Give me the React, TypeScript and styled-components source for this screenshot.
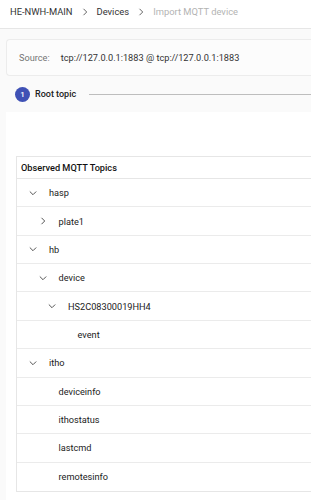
import React from "react";
import styled, { createGlobalStyle } from "styled-components";

interface TopicNode {
  name: string;
  level: number;
  expandable?: boolean;
  open?: boolean;
}

const topics: TopicNode[] = [
  { name: "hasp", level: 0, expandable: true, open: true },
  { name: "plate1", level: 1, expandable: true },
  { name: "hb", level: 0, expandable: true, open: true },
  { name: "device", level: 1, expandable: true, open: true },
  { name: "HS2C08300019HH4", level: 2, expandable: true, open: true },
  { name: "event", level: 3 },
  { name: "itho", level: 0, expandable: true, open: true },
  { name: "deviceinfo", level: 1 },
  { name: "ithostatus", level: 1 },
  { name: "lastcmd", level: 1 },
  { name: "remotesinfo", level: 1 },
];

export default function App() {
  return (
    <>
      <GlobalStyle />
      <Page>
        <Header>
          <Crumb>HE-NWH-MAIN</Crumb>
          <CrumbSep>
            <Chevron open={false} />
          </CrumbSep>
          <Crumb>Devices</Crumb>
          <CrumbSep>
            <Chevron open={false} />
          </CrumbSep>
          <Crumb muted>Import MQTT device</Crumb>
        </Header>
        <Body>
          <SourceCard>
            <SourceLabel>Source:</SourceLabel>
            <SourceValue>tcp://127.0.0.1:1883 @ tcp://127.0.0.1:1883</SourceValue>
          </SourceCard>
          <Stepper>
            <StepDot>1</StepDot>
            <StepLabel>Root topic</StepLabel>
            <StepLine />
          </Stepper>
          <Panel>
            <Table>
              <HeadRow>Observed MQTT Topics</HeadRow>
              {topics.map((t) => (
                <Row key={t.name} level={t.level}>
                  <Toggle>{t.expandable && <Chevron open={!!t.open} />}</Toggle>
                  <TopicName>{t.name}</TopicName>
                </Row>
              ))}
            </Table>
          </Panel>
        </Body>
      </Page>
    </>
  );
}

function Chevron({ open }: { open: boolean }) {
  return (
    <ChevronSvg viewBox="0 0 8 8" open={open}>
      <path d="M2.5 0.8 L5.7 4 L2.5 7.2" fill="none" stroke="currentColor" strokeWidth="1" />
    </ChevronSvg>
  );
}

// styled component
const GlobalStyle = createGlobalStyle`
  html, body {
    margin: 0;
    padding: 0;
    background: #ffffff;
  }
  body {
    font-family: Roboto, "Liberation Sans", sans-serif;
    color: #212121;
    -webkit-font-smoothing: antialiased;
  }
`;

const Page = styled.div`
  width: 311px;
  height: 500px;
  overflow: hidden;
  background: #fafafa;
  display: flex;
  flex-direction: column;
`;

const Header = styled.div`
  height: 29px;
  flex-shrink: 0;
  background: #ffffff;
  border-bottom: 1px solid #e6e6e6;
  box-sizing: border-box;
  display: flex;
  align-items: center;
  padding: 0 0 5px 10px;
  color: #666666;
`;

const Crumb = styled.span<{ muted?: boolean }>`
  font-size: 9.4px;
  color: ${(p) => (p.muted ? "#b3b3b3" : "#333333")};
  white-space: nowrap;
`;

const CrumbSep = styled.span`
  display: flex;
  align-items: center;
  margin: 0 8px 0 8px;
`;

const ChevronSvg = styled.svg<{ open: boolean }>`
  width: 8px;
  height: 8px;
  flex-shrink: 0;
  transform: rotate(${(p) => (p.open ? "90deg" : "0deg")});
`;

const Body = styled.div`
  flex: 1;
  padding: 10px 0 0 6px;
  display: flex;
  flex-direction: column;
`;

const SourceCard = styled.div`
  height: 37px;
  box-sizing: border-box;
  background: #fcfcfc;
  border: 1px solid #ececec;
  border-right: none;
  border-radius: 4px 0 0 4px;
  display: flex;
  align-items: center;
  padding-left: 12px;
  gap: 11px;
  font-size: 9.2px;
  white-space: nowrap;
`;

const SourceLabel = styled.span`
  color: #757575;
`;

const SourceValue = styled.span`
  color: #333333;
`;

const Stepper = styled.div`
  height: 36px;
  display: flex;
  align-items: center;
  padding-left: 9px;
`;

const StepDot = styled.div`
  width: 15px;
  height: 15px;
  border-radius: 50%;
  background: #3f51b5;
  color: #ffffff;
  font-size: 8px;
  font-weight: 500;
  display: flex;
  align-items: center;
  justify-content: center;
  flex-shrink: 0;
`;

const StepLabel = styled.span`
  font-size: 9px;
  font-weight: 500;
  color: #212121;
  margin-left: 5px;
  white-space: nowrap;
`;

const StepLine = styled.div`
  flex: 1;
  height: 1px;
  background: #bdbdbd;
  margin-left: 13px;
`;

const Panel = styled.div`
  flex: 1;
  background: #ffffff;
  padding: 44px 0 0 10px;
`;

const Table = styled.div`
  border: 1px solid #e6e6e6;
  border-right: none;
  display: flex;
  flex-direction: column;
`;

const HeadRow = styled.div`
  height: 22px;
  box-sizing: border-box;
  display: flex;
  align-items: center;
  padding-left: 4px;
  font-size: 9.2px;
  font-weight: 500;
  color: #111111;
  border-bottom: 1px solid #e6e6e6;
`;

const Row = styled.div<{ level: number }>`
  height: 28.36px;
  box-sizing: border-box;
  display: flex;
  align-items: center;
  padding-left: ${(p) => 12 + p.level * 9.5}px;
  border-bottom: 1px solid #ebebeb;
  font-size: 9.2px;
  color: #222222;
  &:last-child {
    border-bottom: none;
  }
`;

const Toggle = styled.span`
  width: 20px;
  display: flex;
  align-items: center;
  color: #555555;
  flex-shrink: 0;
`;

const TopicName = styled.span`
  white-space: nowrap;
`;
